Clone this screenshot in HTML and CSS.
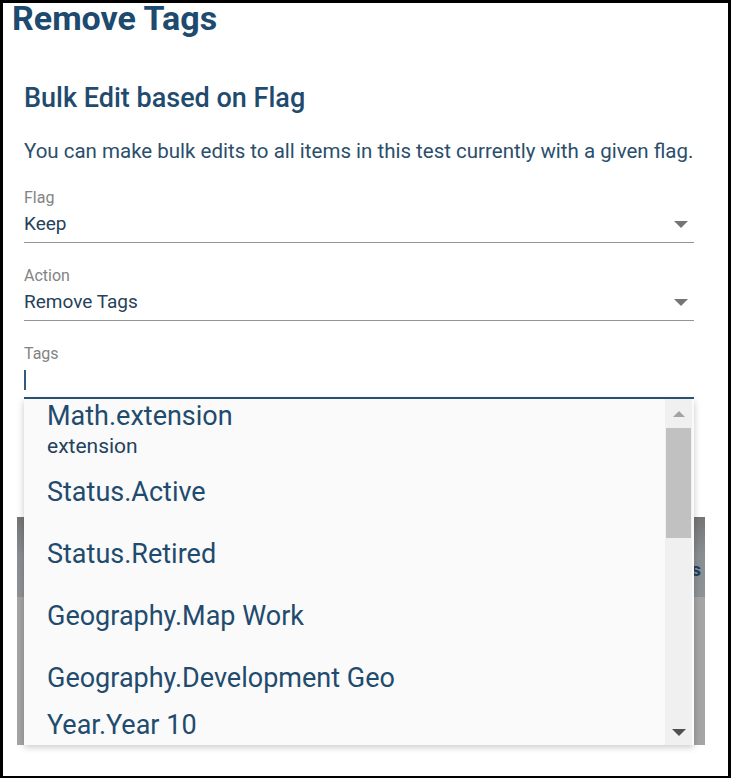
FILE: index.html
```html
<!DOCTYPE html>
<html lang="en">
<head>
<meta charset="utf-8">
<title>Remove Tags</title>
<link rel="stylesheet" href="styles.css">
</head>
<body>
<div class="frame">
  <h1 class="title">Remove Tags</h1>
  <div class="content">
    <h2 class="subtitle">Bulk Edit based on Flag</h2>
    <p class="desc">You can make bulk edits to all items in this test currently with a given flag.</p>

    <div class="field">
      <div class="label">Flag</div>
      <div class="value"><span>Keep</span><span class="caret"></span></div>
    </div>

    <div class="field">
      <div class="label">Action</div>
      <div class="value"><span>Remove Tags</span><span class="caret"></span></div>
    </div>

    <div class="field tags">
      <div class="label">Tags</div>
      <div class="value focused"><span class="cursor"></span></div>
      <div class="menu">
        <div class="menu-list">
          <div class="opt two"><div class="opt-title">Math.extension</div><div class="opt-sub">extension</div></div>
          <div class="opt">Status.Active</div>
          <div class="opt">Status.Retired</div>
          <div class="opt">Geography.Map Work</div>
          <div class="opt">Geography.Development Geo</div>
          <div class="opt two"><div class="opt-title">Year.Year 10</div><div class="opt-sub">Year</div></div>
        </div>
        <div class="scrollbar">
          <div class="sb-btn"><span class="arrow-up"></span></div>
          <div class="sb-thumb"></div>
          <div class="sb-track"></div>
          <div class="sb-btn bottom"><span class="arrow-down"></span></div>
        </div>
      </div>
    </div>

    <div class="panel">
      <div class="panel-head"><span class="panel-btn">Remove Tags</span></div>
      <div class="panel-body"></div>
    </div>
  </div>
</div>
</body>
</html>
```

FILE: styles.css
```css
html, body {
  margin: 0;
  padding: 0;
  background: #ffffff;
}

body {
  font-family: Roboto, "Liberation Sans", Arial, sans-serif;
}

.frame {
  width: 731px;
  height: 778px;
  box-sizing: border-box;
  border-style: solid;
  border-color: #000000;
  border-width: 3px 3px 2px 3px;
  overflow: hidden;
  background: #ffffff;
}

.title {
  margin: 0;
  padding-left: 9px;
  font-size: 34px;
  line-height: 30px;
  font-weight: 700;
  color: #1d4a6f;
}

.content {
  padding: 0 34px 0 21px;
}

.subtitle {
  margin: 49px 0 0 0;
  font-size: 27px;
  line-height: 32px;
  font-weight: 500;
  color: #1f4b6f;
}

.desc {
  margin: 24px 0 0 0;
  font-size: 20.5px;
  line-height: 26px;
  color: #2b4e6c;
  white-space: nowrap;
}

.field {
  margin-top: 23px;
}

.field:first-of-type {
  margin-top: 24px;
}

.label {
  font-size: 16px;
  line-height: 20px;
  color: #838383;
}

.value {
  margin-top: 3px;
  display: flex;
  align-items: center;
  justify-content: space-between;
  height: 26px;
  padding-bottom: 5px;
  border-bottom: 1px solid #949494;
  font-size: 19px;
  line-height: 26px;
  color: #26415a;
}

.value.focused {
  padding-bottom: 4px;
  border-bottom: 2px solid #2b5677;
}

.caret {
  width: 0;
  height: 0;
  margin-right: 6px;
  border-left: 7px solid transparent;
  border-right: 7px solid transparent;
  border-top: 7px solid #757575;
}

.cursor {
  display: block;
  width: 2px;
  height: 20px;
  background: #34597a;
}

.tags {
  position: relative;
}

.menu {
  position: absolute;
  top: 100%;
  left: 0;
  right: 0;
  height: 346px;
  display: flex;
  background: #fafafa;
  box-shadow: 0 2px 7px rgba(0, 0, 0, 0.22);
  z-index: 5;
}

.menu-list {
  flex: 1;
  overflow: hidden;
  padding-top: 1px;
  color: #1f4b6e;
}

.opt {
  height: 62px;
  display: flex;
  align-items: center;
  padding-left: 23px;
  font-size: 27px;
  line-height: 32px;
  white-space: nowrap;
}

.opt.two {
  height: auto;
  display: block;
  padding-top: 0;
  padding-bottom: 2px;
}

.opt-title {
  font-size: 27px;
  line-height: 32px;
}

.opt-sub {
  margin-top: 1px;
  font-size: 21px;
  line-height: 26px;
  color: #24425e;
}

.scrollbar {
  width: 27px;
  margin-right: 2px;
  display: flex;
  flex-direction: column;
  background: #f0f0f0;
}

.sb-btn {
  height: 29px;
  display: flex;
  align-items: center;
  justify-content: center;
}

.sb-btn.bottom {
  height: 27px;
}

.arrow-up {
  width: 0;
  height: 0;
  border-left: 6px solid transparent;
  border-right: 6px solid transparent;
  border-bottom: 6px solid #a3a3a3;
}

.arrow-down {
  width: 0;
  height: 0;
  margin-top: 2px;
  border-left: 7px solid transparent;
  border-right: 7px solid transparent;
  border-top: 7px solid #505050;
}

.sb-thumb {
  height: 110px;
  margin: 0 1px;
  background: #c1c1c1;
}

.sb-track {
  flex: 1;
}

.panel {
  margin: 118px -11px 0 -7px;
  height: 228px;
  display: flex;
  flex-direction: column;
}

.panel-head {
  height: 80px;
  box-sizing: border-box;
  padding: 41px 4px 0 0;
  display: flex;
  justify-content: flex-end;
  background: linear-gradient(#757575, #8a8f94 50%, #8e9296);
}

.panel-btn {
  font-size: 19px;
  line-height: 24px;
  font-weight: 700;
  color: #1f3f59;
}

.panel-body {
  flex: 1;
  background: #a5a5a5;
}
```
